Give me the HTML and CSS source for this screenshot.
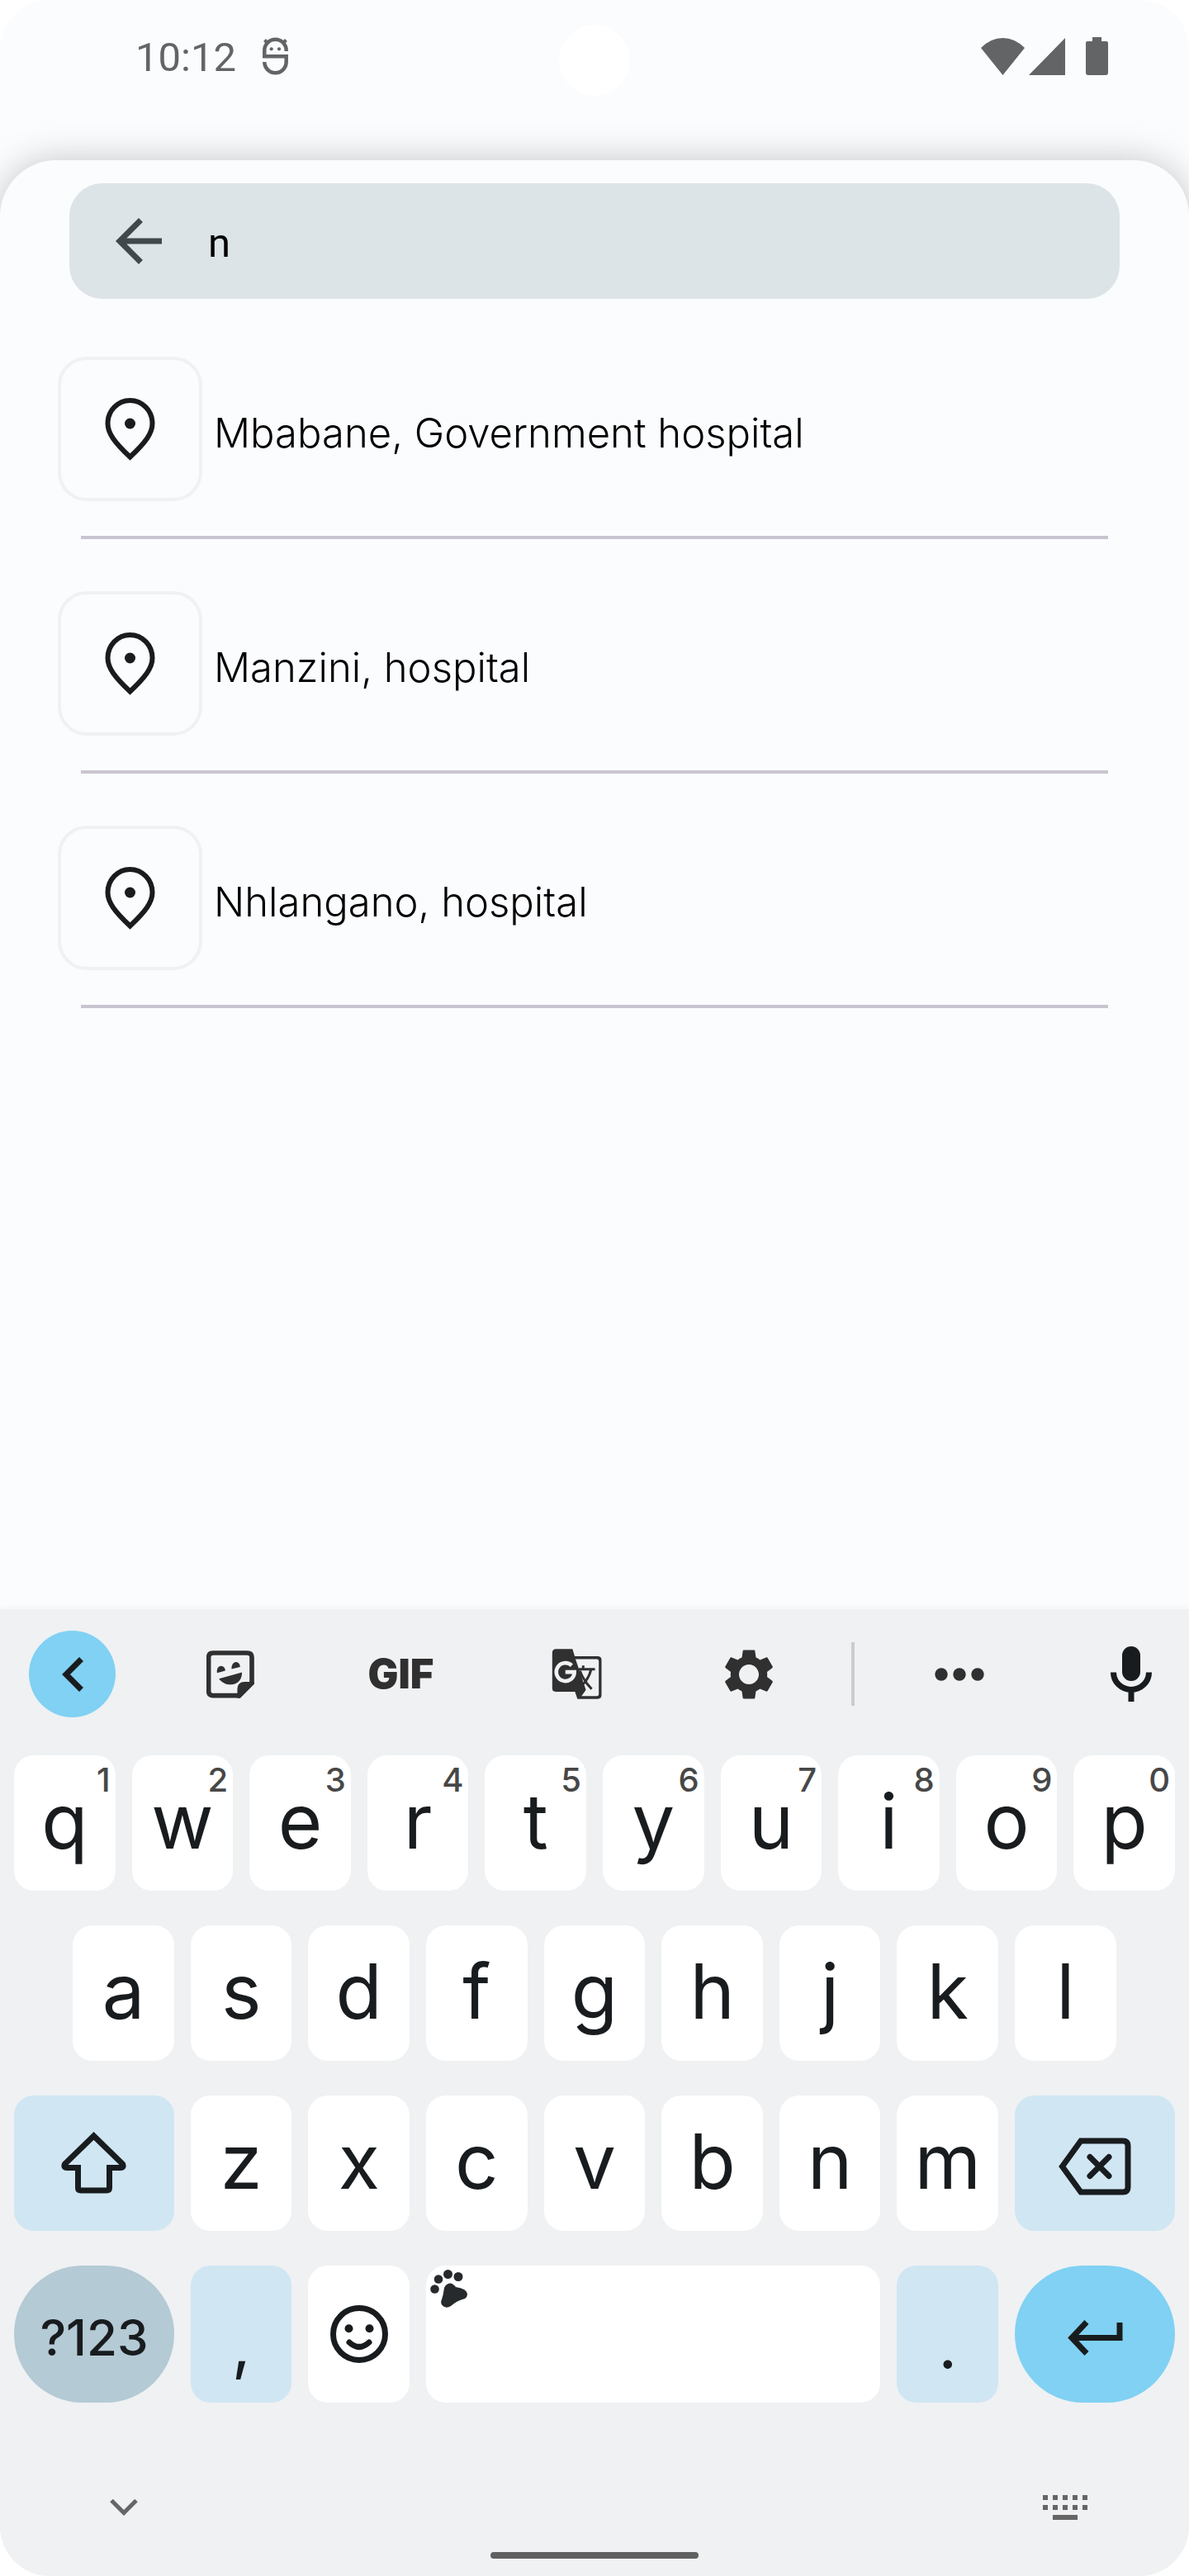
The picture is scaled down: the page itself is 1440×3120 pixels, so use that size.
FILE: index.html
```html
<!DOCTYPE html>
<html lang="en">
<head>
<meta charset="utf-8">
<meta name="viewport" content="width=device-width, initial-scale=1">
<title>Search hospitals</title>
<link rel="stylesheet" href="styles.css">
</head>
<body>
<div class="phone">
  <header class="status">
    <div class="status-group">
      <span class="time">10:12</span>
      <svg class="outline" width="31" height="46" viewBox="18 15 31 46" stroke-width="4.5" aria-hidden="true">
        <path d="M46.7 32V31A13 13 0 0 0 20.3 31V38.2H46.7V45A13.2 13.2 0 0 1 20.3 45"/>
        <path d="M20.5 18.5L25 23M46.5 18.5L42 23" stroke-width="4"/>
        <circle class="solid" cx="28.7" cy="29.3" r="2.1"/><circle class="solid" cx="38" cy="29.3" r="2.1"/>
      </svg>
    </div>
    <span class="camera"></span>
    <div class="status-group">
      <svg width="53" height="45" viewBox="0 0 53 45" aria-hidden="true"><path d="M0 12Q12 0 26.5 0T53 12L26.5 45Z"/></svg>
      <svg class="signal" width="44" height="45" viewBox="0 0 44 45" aria-hidden="true"><path d="M44 0V45H0Z"/></svg>
      <svg width="27" height="46" viewBox="0 0 27 46" aria-hidden="true"><path d="M8 0H19V5H25Q27 5 27 7V43Q27 46 24 46H3Q0 46 0 43V7Q0 5 2 5H8Z"/></svg>
    </div>
  </header>

  <main class="sheet">
    <div class="search">
      <button class="back" type="button" aria-label="Back">
        <svg width="84" height="84" viewBox="0 0 24 24"><path d="M20 11H7.83l5.59-5.59L12 4l-8 8 8 8 1.41-1.41L7.83 13H20v-2z"/></svg>
      </button>
      <input class="query" type="text" value="n" aria-label="Search">
    </div>
    <ul class="results">
      <li class="result">
        <a class="place" href="#">
          <span class="pin"><svg class="outline" width="61" height="76" viewBox="0 0 61 76" stroke-width="6"><path d="M30.5 71.5C12 54 3.5 43 3.5 31A27 28 0 0 1 57.5 31C57.5 43 49 54 30.5 71.5Z"/><circle class="solid" cx="30.5" cy="31" r="6.5"/></svg></span>
          <span class="name">Mbabane, Government hospital</span>
        </a>
      </li>
      <li class="result">
        <a class="place" href="#">
          <span class="pin"><svg class="outline" width="61" height="76" viewBox="0 0 61 76" stroke-width="6"><path d="M30.5 71.5C12 54 3.5 43 3.5 31A27 28 0 0 1 57.5 31C57.5 43 49 54 30.5 71.5Z"/><circle class="solid" cx="30.5" cy="31" r="6.5"/></svg></span>
          <span class="name">Manzini, hospital</span>
        </a>
      </li>
      <li class="result">
        <a class="place" href="#">
          <span class="pin"><svg class="outline" width="61" height="76" viewBox="0 0 61 76" stroke-width="6"><path d="M30.5 71.5C12 54 3.5 43 3.5 31A27 28 0 0 1 57.5 31C57.5 43 49 54 30.5 71.5Z"/><circle class="solid" cx="30.5" cy="31" r="6.5"/></svg></span>
          <span class="name">Nhlangano, hospital</span>
        </a>
      </li>
    </ul>
  </main>

  <section class="keyboard" aria-label="Keyboard">
    <div class="toolbar">
      <button class="tool round" type="button" aria-label="Collapse toolbar"><svg class="outline" width="26" height="42" viewBox="0 0 26 42" stroke-width="7"><path d="M23.5 2.5L5 21L23.5 39.5"/></svg></button>
      <button class="tool" type="button" aria-label="Stickers">
        <svg width="58" height="58" viewBox="58 55 175 175">
          <path fill="none" stroke="currentColor" stroke-width="17" d="M83 64H207q17 0 17 17V174L178 220H83q-17 0-17-17V81q0-17 17-17z"/>
          <path d="M232 178L181 229H171V197Q171 170 198 170H232z"/>
          <path d="M97 137C94 118 106 110 114 112C122 113 127 120 127 129Z"/>
          <path d="M150 123C149 104 160 96 167 97C176 98 181 106 181 115Z"/>
          <path d="M104 158L188 135C188 190 125 190 104 158z"/>
        </svg>
      </button>
      <button class="tool gif" type="button">GIF</button>
      <button class="tool" type="button" aria-label="Translate">
        <svg width="61" height="61" viewBox="54 56 183 184">
          <path d="M70 57H130L138 83H222Q236 83 236 97V225Q236 239 222 239H148L139 213H70Q56 213 56 199V71Q56 57 70 57Z"/>
          <path fill="#eff1f3" d="M141 94H219Q226 94 226 101V222Q226 229 219 229H163L179 206Z"/>
          <path fill="none" stroke="#eff1f3" stroke-width="14" d="M127 117A33 33 0 1 0 137 141H104"/>
          <path fill="none" stroke="currentColor" stroke-width="9" d="M152 131H212M169 117V131M198 131Q190 165 166 188M157 137Q170 172 200 203"/>
        </svg>
      </button>
      <button class="tool" type="button" aria-label="Settings">
        <svg width="74" height="74" viewBox="0 0 24 24"><path d="M19.14 12.94c.04-.3.06-.61.06-.94 0-.32-.02-.64-.07-.94l2.03-1.58c.18-.14.23-.41.12-.61l-1.92-3.32c-.12-.22-.37-.29-.59-.22l-2.39.96c-.5-.38-1.03-.7-1.62-.94l-.36-2.54c-.04-.24-.24-.41-.48-.41h-3.84c-.24 0-.43.17-.47.41l-.36 2.54c-.59.24-1.13.57-1.62.94l-2.39-.96c-.22-.08-.47 0-.59.22L2.74 8.87c-.12.21-.08.47.12.61l2.03 1.58c-.05.3-.09.63-.09.94s.02.64.07.94l-2.03 1.58c-.18.14-.23.41-.12.61l1.92 3.32c.12.22.37.29.59.22l2.39-.96c.5.38 1.03.7 1.62.94l.36 2.54c.05.24.24.41.48.41h3.84c.24 0 .44-.17.47-.41l.36-2.54c.59-.24 1.13-.56 1.62-.94l2.39.96c.22.08.47 0 .59-.22l1.92-3.32c.12-.22.07-.47-.12-.61l-2.01-1.58zM12 15.9c-2.1 0-3.9-1.8-3.9-3.9s1.8-3.9 3.9-3.9 3.9 1.8 3.9 3.9-1.8 3.9-3.9 3.9z"/></svg>
      </button>
      <span class="separator"></span>
      <button class="tool" type="button" aria-label="More"><svg width="60" height="16" viewBox="0 0 60 16"><circle cx="8" cy="8" r="7.7"/><circle cx="30" cy="8" r="7.7"/><circle cx="52" cy="8" r="7.7"/></svg></button>
      <button class="tool mic" type="button" aria-label="Voice input">
        <svg width="50" height="67" viewBox="0 0 50 67"><rect x="14" width="22" height="42" rx="11"/><path fill="none" stroke="currentColor" stroke-width="7" d="M3.5 31.5A21.5 21 0 0 0 46.5 31.5M25 52V67"/></svg>
      </button>
    </div>

    <div class="keys">
      <button class="key" type="button">q<sup class="hint">1</sup></button>
      <button class="key" type="button">w<sup class="hint">2</sup></button>
      <button class="key" type="button">e<sup class="hint">3</sup></button>
      <button class="key" type="button">r<sup class="hint">4</sup></button>
      <button class="key" type="button">t<sup class="hint">5</sup></button>
      <button class="key" type="button">y<sup class="hint">6</sup></button>
      <button class="key" type="button">u<sup class="hint">7</sup></button>
      <button class="key" type="button">i<sup class="hint">8</sup></button>
      <button class="key" type="button">o<sup class="hint">9</sup></button>
      <button class="key" type="button">p<sup class="hint">0</sup></button>

      <button class="key indent" type="button">a</button>
      <button class="key" type="button">s</button>
      <button class="key" type="button">d</button>
      <button class="key" type="button">f</button>
      <button class="key" type="button">g</button>
      <button class="key" type="button">h</button>
      <button class="key" type="button">j</button>
      <button class="key" type="button">k</button>
      <button class="key" type="button">l</button>

      <button class="key wide soft icon" type="button" aria-label="Shift"><svg class="outline" width="79" height="76" viewBox="0 0 79 76" stroke-width="7"><path d="M39.5 5L4.5 39Q2.5 43.5 7 43.5H20.5V68Q20.5 71 24 71H55Q58.5 71 58.5 68V43.5H72Q76.5 43.5 74.5 39Z"/></svg></button>
      <button class="key" type="button">z</button>
      <button class="key" type="button">x</button>
      <button class="key" type="button">c</button>
      <button class="key" type="button">v</button>
      <button class="key" type="button">b</button>
      <button class="key" type="button">n</button>
      <button class="key" type="button">m</button>
      <button class="key wide soft icon low" type="button" aria-label="Backspace"><svg class="outline" width="88" height="70" viewBox="0 0 88 70" stroke-width="7"><path d="M27 4H78q6 0 6 6V60q0 6-6 6H27L4.5 35Z"/><path stroke-linecap="round" d="M38 23.5L61 46.5M61 23.5L38 46.5"/></svg></button>

      <button class="key wide pill symbols" type="button">?123</button>
      <button class="key soft punct" type="button">,</button>
      <button class="key icon" type="button" aria-label="Emoji"><svg class="outline" width="70" height="70" viewBox="0 0 70 70" stroke-width="7"><circle cx="35" cy="35" r="31.5"/><path stroke-linecap="round" d="M23 45Q35 56 47 45"/><circle class="solid" cx="22.5" cy="28.3" r="5"/><circle class="solid" cx="47.5" cy="28.3" r="5"/></svg></button>
      <button class="key space" type="button" aria-label="Space"><svg width="46" height="46" viewBox="0 0 46 46"><circle cx="5.5" cy="23.5" r="5.3"/><circle cx="10" cy="11.5" r="5.3"/><circle cx="21.5" cy="5.5" r="5.5"/><circle cx="34" cy="8.5" r="5.5"/><path d="M24 16.5Q27 16 31 21Q44 23 45 29Q45 35 39 36Q32 38 25 44Q19 48 14.5 43Q12 40 14 36Q16 30 17 22Q19 17 24 16.5Z"/></svg></button>
      <button class="key soft punct" type="button">.</button>
      <button class="key wide pill enter low" type="button" aria-label="Enter"><svg class="outline" width="67" height="43" viewBox="0 0 67 43" stroke-width="7"><path d="M23 2.5L5 21.5L23 40.5M5 21.5H63V3"/></svg></button>
    </div>

    <div class="nav">
      <button class="nav-button" type="button" aria-label="Hide keyboard"><svg class="outline" width="34" height="20" viewBox="0 0 34 20" stroke-width="5"><path d="M2 1.5L17 16.5L32 1.5"/></svg></button>
      <button class="nav-button" type="button" aria-label="Switch keyboard"><svg width="54" height="30" viewBox="0 0 54 30"><path d="M0 0h6v6H0zM12 0h6v6h-6zM24 0h6v6h-6zM36 0h6v6h-6zM48 0h6v6h-6zM0 12h6v6H0zM12 12h6v6h-6zM24 12h6v6h-6zM36 12h6v6h-6zM48 12h6v6h-6zM12 24h30v6H12z"/></svg></button>
    </div>
    <div class="home"></div>
  </section>
</div>
</body>
</html>
```
FILE: styles.css
```css
* { box-sizing: border-box; }

body {
  margin: 0;
  background: #fff;
  color: #191c1e;
  font-family: Inter, "Open Sans", sans-serif;
}

button {
  display: flex;
  align-items: center;
  justify-content: center;
  padding: 0;
  border: 0;
  background: none;
  color: inherit;
  font: inherit;
}

svg {
  display: block;
  flex: none;
  fill: currentColor;
}

.outline { fill: none; stroke: currentColor; }
.solid { fill: currentColor; stroke: none; }

.phone {
  display: flex;
  flex-direction: column;
  min-height: 100vh;
  overflow: hidden;
  border-radius: 60px;
  background: #fbfcfe;
}

/* Status bar */
.status {
  position: relative;
  display: flex;
  align-items: flex-start;
  justify-content: space-between;
  height: 194px;
  padding: 40px 98px 0 164px;
  color: #636466;
}

.status-group {
  display: flex;
  align-items: center;
  height: 56px;
}

.time {
  margin-right: 32px;
  padding-top: 4px;
  font-family: Roboto, sans-serif;
  font-size: 49px;
  line-height: 56px;
}

.signal { margin: 0 25px 0 5px; }

.camera {
  position: absolute;
  top: 30px;
  left: calc(50% - 43px);
  width: 86px;
  height: 86px;
  border-radius: 50%;
  background: #fff;
}

/* Search sheet */
.sheet {
  flex: 1;
  padding: 28px 84px 0;
  border-radius: 68px 68px 0 0;
  background: #fbfcfe;
  box-shadow: 0 0 44px rgba(0, 0, 0, .22);
}

.search {
  display: flex;
  align-items: center;
  height: 140px;
  padding: 0 42px;
  border-radius: 40px;
  background: #dce4e7;
}

.back { color: #40484b; }

.query {
  flex: 1;
  min-width: 0;
  height: 84px;
  padding: 4px 0 0 42px;
  border: 0;
  outline: 0;
  background: none;
  color: #000;
  font-family: Roboto, sans-serif;
  font-size: 49px;
}

.results {
  margin: 70px 0 0;
  padding: 0;
  list-style: none;
}

.result {
  height: 284px;
}

.result::after {
  display: block;
  height: 4px;
  margin: 42px 14px 0;
  background: #c9c5d0;
  content: "";
}

.place {
  display: flex;
  align-items: center;
  gap: 14px;
  margin-left: -14px;
  color: #000;
  text-decoration: none;
}

.pin {
  display: flex;
  align-items: center;
  justify-content: center;
  width: 175px;
  height: 175px;
  border: 4px solid #f0f1f3;
  border-radius: 35px;
  color: #191c1e;
}

.name {
  padding-top: 10px;
  font-size: 49px;
  font-weight: 300;
}

/* Keyboard */
.keyboard {
  padding-bottom: 21px;
  background: #eff1f3;
  box-shadow: 0 0 8px #eff1f3;
}

.toolbar {
  display: grid;
  grid-template-columns: 175fr 208fr 205fr 220fr 197fr 56fr 201fr 178fr;
  align-items: center;
  justify-items: center;
  padding: 26px 0 46px;
}

.tool {
  width: 105px;
  height: 105px;
  color: #303030;
}

.round {
  border-radius: 50%;
  background: #80d1f3;
  color: #191c1e;
}

.gif {
  font-size: 49px;
  font-weight: 900;
}

.separator {
  width: 4px;
  height: 77px;
  background: #caccce;
}

.mic {
  justify-self: end;
  margin-right: 18px;
  color: #191c1e;
}

.keys {
  display: grid;
  grid-template-columns: repeat(20, minmax(0, 1fr));
  grid-template-rows: repeat(3, 164px) 166px;
  gap: 42px 20px;
  padding: 0 17px;
}

.key {
  position: relative;
  grid-column: span 2;
  padding-bottom: 5px;
  border-radius: 24px;
  background: #fff;
  font-size: 92px;
  line-height: 92px;
}

.hint {
  position: absolute;
  top: 10px;
  right: 6px;
  color: #474747;
  font-size: 40px;
  font-weight: 500;
  line-height: 40px;
}

.indent { grid-column: 2 / span 2; }
.wide { grid-column: span 3; }
.soft { background: #d0e6f3; }
.icon { padding: 0; }
.low { padding: 8px 0 0; }

.pill {
  border-radius: 83px;
  background: #b4cad5;
}

.symbols {
  padding: 8px 0 0;
  font-size: 60px;
  font-weight: 500;
}

.punct {
  padding: 24px 0 0;
  font-size: 80px;
}

.space {
  grid-column: span 8;
  align-items: flex-start;
  justify-content: flex-start;
  padding: 5px;
  color: #272a2c;
}

.enter { background: #80d1f3; }

.nav {
  display: flex;
  justify-content: space-between;
  padding: 97px 120px 0;
  color: #666;
}

.nav-button {
  width: 60px;
  height: 60px;
}

.home {
  width: 252px;
  height: 8px;
  margin: 24px auto 0;
  border-radius: 4px;
  background: #606060;
}
```
